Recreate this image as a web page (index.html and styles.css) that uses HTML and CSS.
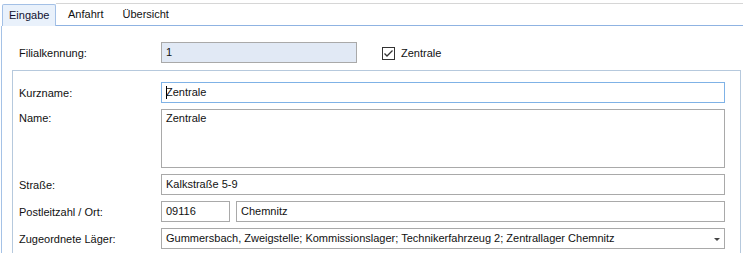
FILE: index.html
```html
<!DOCTYPE html>
<html lang="de">
<head>
<meta charset="utf-8">
<title>Filiale</title>
<link rel="stylesheet" href="styles.css">
</head>
<body>
<div class="tabbar">
  <div class="tab active">Eingabe</div>
  <div class="tabrest">
    <div class="tab">Anfahrt</div>
    <div class="tab">Übersicht</div>
  </div>
</div>
<div class="page">
  <div class="toprow">
    <span class="lbl">Filialkennung:</span>
    <div class="field readonly id">1</div>
    <label class="check"><span class="box"><svg width="11" height="11" viewBox="0 0 11 11"><path d="M1.5 5.5 L4 8 L9.5 2.5" fill="none" stroke="#333" stroke-width="1.3"/></svg></span>Zentrale</label>
  </div>
  <div class="group">
    <div class="frow">
      <span class="lbl">Kurzname:</span>
      <div class="field focus"><span class="caret"></span>Zentrale</div>
    </div>
    <div class="frow top">
      <span class="lbl lbltop">Name:</span>
      <div class="field area">Zentrale</div>
    </div>
    <div class="frow">
      <span class="lbl">Straße:</span>
      <div class="field">Kalkstraße 5-9</div>
    </div>
    <div class="frow">
      <span class="lbl">Postleitzahl / Ort:</span>
      <div class="split">
        <div class="field plz">09116</div>
        <div class="field">Chemnitz</div>
      </div>
    </div>
    <div class="frow">
      <span class="lbl">Zugeordnete Läger:</span>
      <div class="field combo"><span class="ctext">Gummersbach, Zweigstelle; Kommissionslager; Technikerfahrzeug 2; Zentrallager Chemnitz</span><span class="arrow"></span></div>
    </div>
  </div>
</div>
</body>
</html>
```
FILE: styles.css
```css
html, body {
  margin: 0;
  padding: 0;
  background: #ffffff;
}
body {
  font: 11px "Liberation Sans", Arial, sans-serif;
  color: #111;
  width: 743px;
  height: 253px;
  overflow: hidden;
}
.tabbar {
  display: flex;
  height: 26px;
  padding-left: 2px;
  box-sizing: border-box;
}
.tab {
  line-height: 21px;
  white-space: nowrap;
}
.tab.active {
  margin-top: 4px;
  height: 22px;
  width: 54px;
  box-sizing: border-box;
  border: 1px solid #a3c0e6;
  border-bottom: none;
  border-radius: 2px 2px 0 0;
  background: #e9f1fb;
  padding-left: 6px;
  color: #101030;
}
.tabrest {
  flex: 1;
  margin-top: 3px;
  height: 23px;
  box-sizing: border-box;
  border-top: 1px solid #d6d6d6;
  border-bottom: 1px solid #8fb3e2;
  display: flex;
  gap: 19px;
  padding-left: 12px;
}
.page {
  margin-left: 1px;
  border-left: 1px solid #a5c2e6;
  padding: 16px 0 0 17px;
  height: 227px;
  box-sizing: border-box;
}
.lbl {
  width: 142px;
  flex: none;
  white-space: nowrap;
}
.toprow {
  display: flex;
  align-items: center;
  height: 21px;
}
.field {
  height: 21px;
  box-sizing: border-box;
  border: 1px solid #a9a9a9;
  background: #fff;
  padding-left: 4px;
  line-height: 19px;
  white-space: nowrap;
  overflow: hidden;
  flex: 1;
}
.field.readonly {
  background: #e1e9f5;
}
.field.id {
  flex: none;
  width: 196px;
}
.check {
  margin-left: 25px;
  display: flex;
  align-items: center;
  gap: 6px;
  margin-top: 1px;
}
.box {
  width: 13px;
  height: 13px;
  box-sizing: border-box;
  border: 1px solid #333;
  background: #fff;
  display: flex;
  align-items: center;
  justify-content: center;
}
.box svg {
  display: block;
}
.group {
  margin: 7px 2px 0 -7px;
  border: 1px solid #b6c9dd;
  padding: 11px 15px 12px 6px;
  display: flex;
  flex-direction: column;
  gap: 6px;
}
.frow {
  display: flex;
  align-items: center;
}
.frow.top {
  align-items: flex-start;
}
.lbltop {
  padding-top: 3px;
}
.field.focus {
  border-color: #7fb2e6;
}
.caret {
  display: inline-block;
  width: 0;
  height: 13px;
  border-left: 1px solid #000;
  margin-right: -1px;
  vertical-align: -3px;
}
.field.area {
  height: 59px;
  line-height: 13px;
  padding-top: 2px;
}
.split {
  flex: 1;
  display: flex;
  gap: 6px;
}
.field.plz {
  flex: none;
  width: 69px;
}
.field.combo {
  display: flex;
  align-items: center;
  justify-content: space-between;
  padding-right: 4px;
}
.arrow {
  width: 0;
  height: 0;
  border-left: 3px solid transparent;
  border-right: 3px solid transparent;
  border-top: 3px solid #444;
  margin-top: 1px;
}
```
